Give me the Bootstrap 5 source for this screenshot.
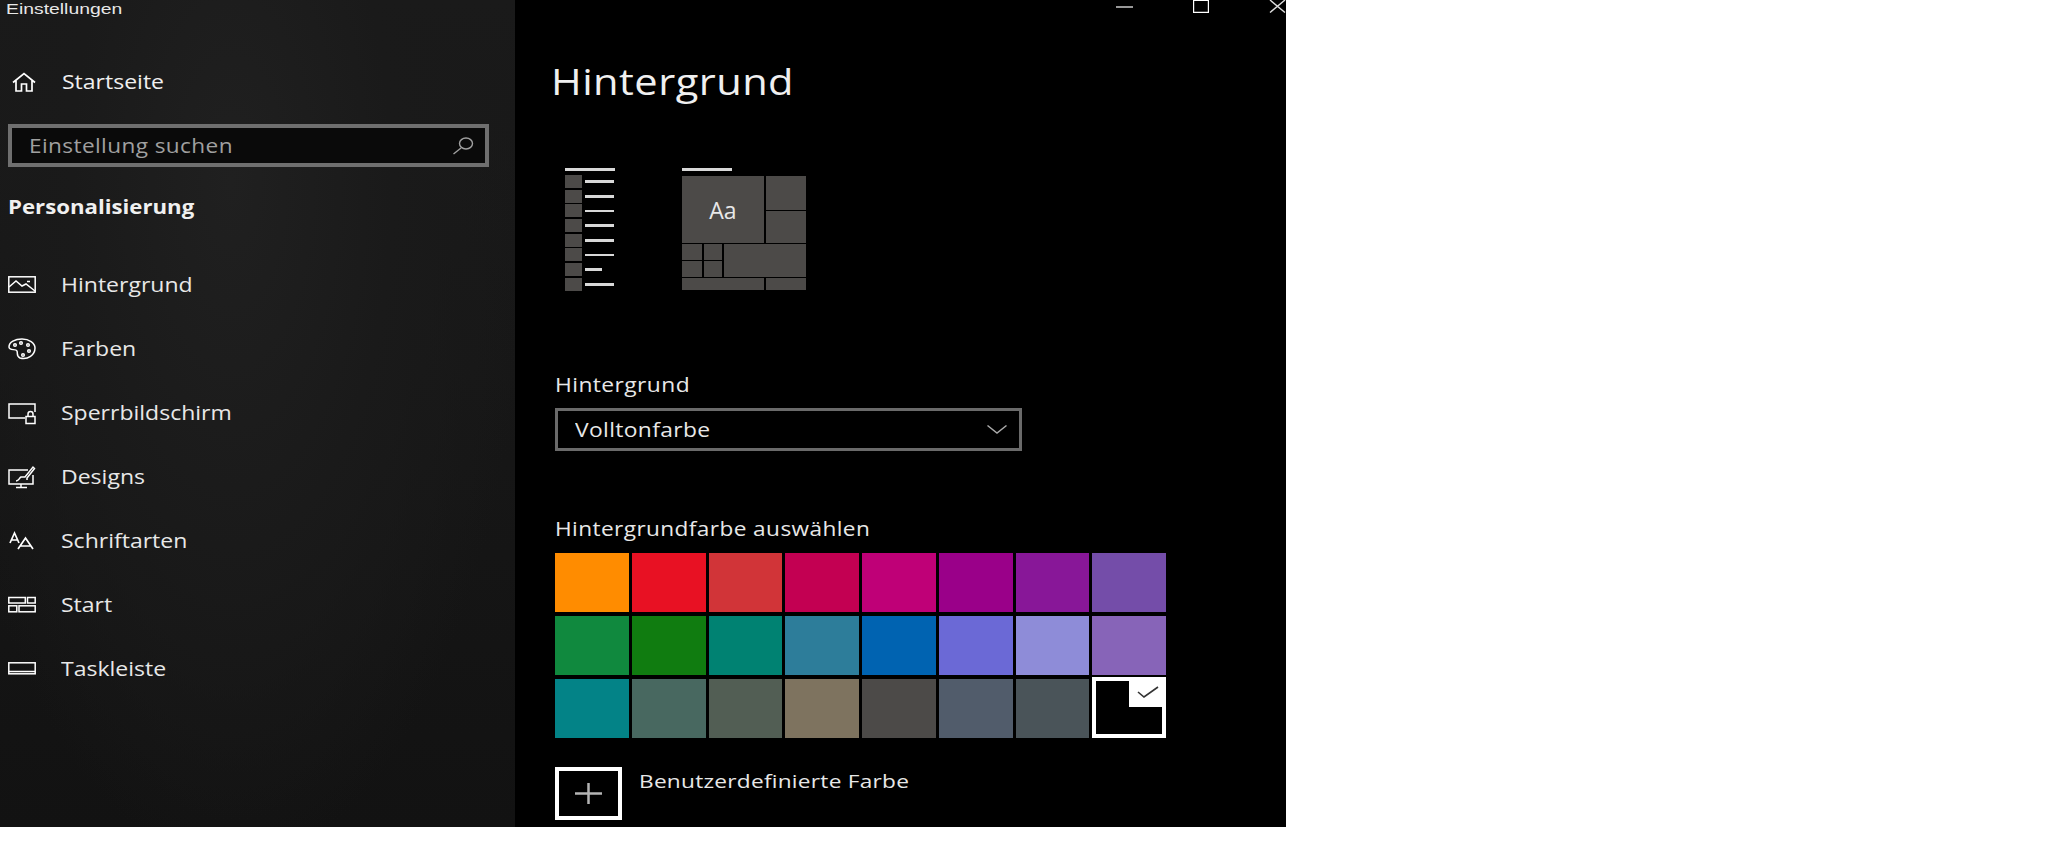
<!DOCTYPE html>
<html lang="de">
<head>
<meta charset="utf-8">
<title>Einstellungen</title>
<link href="https://cdn.jsdelivr.net/npm/bootstrap@5.3.0/dist/css/bootstrap.min.css" rel="stylesheet">
<style>
html,body{background:#fff;margin:0;height:864px;overflow:hidden}
body{font-family:"Open Sans","Liberation Sans",sans-serif;color:#f0f0f0;font-size:20px}
svg{display:block;flex:none}
.wide{display:inline-block;transform-origin:left center}
.win{width:1286px;height:827px;background:#000;overflow:hidden}
.side{width:515px;background:radial-gradient(ellipse at 45% 22%,#202020 0,#1a1a1a 40%,transparent 75%),linear-gradient(180deg,#1a1a1a 0,#171717 45%,#121212 100%);padding-left:8px}
.wintitle{height:16px;line-height:normal;font-family:"Liberation Sans",sans-serif;font-size:15px;margin-left:-2px;color:#e8e8e8}
.wintitle .wide{transform:scaleX(1.29)}
.home{height:32px;margin-top:50px;padding-left:4px;gap:26px;line-height:32px;font-size:19.5px}
.home .wide,.navrow .wide{transform:scaleX(1.18)}
.searchbox{width:481px;height:43px;margin-top:26px;border:4px solid #6f6f6f;background:#0a0a0a;padding:0 11px 0 17px;color:#a0a0a0;font-size:20px;letter-spacing:.35px}
.searchbox .wide{transform:scaleX(1.13)}
.grouphead{height:32px;margin-top:24px;line-height:32px;font-weight:700;font-size:20px}
.grouphead .wide{transform:scaleX(1.11)}
.navlist{margin-top:30px}
.navrow{height:64px;gap:25px;font-size:19.5px;color:#e8e8e8}
.navrow svg{width:28px;height:24px}
.main{padding-left:40px}
.ctrls{height:16px}
.ctrl-min{margin-right:60px}
.ctrl-max{margin-right:60px}
.pagehead{height:50px;line-height:50px;margin:40px 0 0 -4px;font-size:36.5px;font-weight:400;letter-spacing:.4px}
.pagehead .wide{transform:scaleX(1.14)}
.preview{margin-top:62px;height:123px;padding-left:10px;gap:67px}
.listprev{width:50px;gap:1.7px}
.prevbar{height:3px;background:#d8d8d8}
.listprev .prevbar{margin-bottom:2.3px}
.listrow{height:13px;gap:3px;align-items:center}
.sq{width:17px;height:13px;background:#4c4a48}
.ln{height:3px;width:29px;background:#d8d8d8}
.ln-thin{height:2px}
.ln-short{width:17px}
.tilehead{width:50px}
.tiles{display:grid;width:124px;margin-top:5px;grid-template-columns:20px 18px 40px 40px;grid-template-rows:34px 32px 16px 16px 12px;gap:1px 2px}
.tiles div{background:#4c4a48}
.tiles .t-aa{grid-column:1/4;grid-row:1/3;font-size:23px;line-height:68px;text-align:center;color:#e8e8e8}
.t-wide{grid-column:3/5;grid-row:3/5}
.t-b1{grid-column:1/4}
.fieldlabel{height:28px;line-height:28px;font-size:19.5px;letter-spacing:.35px;color:#e8e8e8}
.fl1{margin-top:80px}
.fl1 .wide{transform:scaleX(1.17)}
.fl2{margin-top:64px}
.fl2 .wide{transform:scaleX(1.16)}
.selectbox{width:467px;height:43px;margin-top:9px;border:3.5px solid #6a6a6a;padding:0 12px 0 17px;font-size:19.5px;letter-spacing:.3px;color:#e8e8e8}
.selectbox .wide{transform:scaleX(1.17)}
.palette{display:grid;width:611px;margin-top:10px;grid-template-columns:repeat(8,1fr);grid-auto-rows:59px;gap:4px 3px}
.swatch-on{background:#000;border:4px solid #fff;margin-top:-2px;position:relative}
.notch{position:absolute;top:-4px;right:-4px;width:37px;height:30px;background:#fff;display:flex;align-items:center;justify-content:center}
.custom{margin-top:29px;gap:17px}
.plusbox{width:67px;height:53px;border:4px solid #fff}
.customlabel{line-height:28px;font-size:18.5px;letter-spacing:.2px;color:#e8e8e8}
.customlabel .wide{transform:scaleX(1.225)}
</style>
</head>
<body>
<div class="win d-flex">
  <aside class="side flex-shrink-0">
    <div class="wintitle"><span class="wide">Einstellungen</span></div>
    <div class="home d-flex align-items-center">
      <svg width="24" height="20" viewBox="0 0 24 20" fill="none" stroke="#fff" stroke-width="1.7"><path d="M1 10.500 12 1.500 23 10.500M4 8.500V19H9.500V12H14.500V19H20V8.500"/></svg>
      <span class="wide">Startseite</span>
    </div>
    <div class="searchbox d-flex align-items-center justify-content-between">
      <span class="wide">Einstellung suchen</span>
      <svg width="22" height="18" viewBox="0 0 22 18" fill="none" stroke="#a0a0a0" stroke-width="1.4"><ellipse cx="14" cy="6.5" rx="6.5" ry="5.5"/><path d="M9 11 1.5 17"/></svg>
    </div>
    <div class="grouphead"><span class="wide">Personalisierung</span></div>
    <nav class="navlist">
      <div class="navrow d-flex align-items-center">
        <svg viewBox="0 0 28 24" fill="none" stroke="#fff" stroke-width="1.5"><rect x=".8" y="3.8" width="26.4" height="15.4"/><path d="M1 14 8 8l6 5 4-2 9 7M19 8.5h3" /></svg>
        <span class="wide">Hintergrund</span>
      </div>
      <div class="navrow d-flex align-items-center">
        <svg viewBox="0 0 28 24" fill="none" stroke="#fff" stroke-width="1.5"><path d="M14 2C7 2 1 5 1 10c0 4 7 1.500 8 4 1 2.500-1 5 3 7 8 2 15-3 15-10 0-5-6-9-13-9Z"/><circle cx="7" cy="8" r="1.300"/><circle cx="13" cy="6" r="1.300"/><circle cx="20" cy="8" r="1.300"/><circle cx="21" cy="14" r="1.300"/><circle cx="15" cy="18" r="1.300"/></svg>
        <span class="wide">Farben</span>
      </div>
      <div class="navrow d-flex align-items-center">
        <svg viewBox="0 0 28 24" fill="none" stroke="#fff" stroke-width="1.5"><path d="M17 17H1V3h26v8"/><rect x="18" y="15.500" width="9" height="7"/><path d="M20 15.500v-2.500a2.500 2.500 0 0 1 5 0v2.500"/></svg>
        <span class="wide">Sperrbildschirm</span>
      </div>
      <div class="navrow d-flex align-items-center">
        <svg viewBox="0 0 28 24" fill="none" stroke="#fff" stroke-width="1.5"><path d="M20 5H1v14h24V10M13 19v3M8 22.500h11"/><path d="M8 16c3 0 3-3 5-4l4 0 8-10 1.500 1.500L19 13v2" /></svg>
        <span class="wide">Designs</span>
      </div>
      <div class="navrow d-flex align-items-center">
        <svg viewBox="0 0 28 24" fill="none" stroke="#fff" stroke-width="1.700"><path d="m2 14 4.500-10L11 14M3.500 11h6M10 20 17.500 9 25 20M12.500 17h10"/></svg>
        <span class="wide">Schriftarten</span>
      </div>
      <div class="navrow d-flex align-items-center">
        <svg viewBox="0 0 28 24" fill="none" stroke="#fff" stroke-width="1.500"><rect x=".8" y="4.500" width="16.500" height="5.500"/><rect x="19.500" y="4.500" width="7.700" height="5.500"/><rect x=".8" y="12.800" width="8" height="6"/><rect x="11" y="12.800" width="16.200" height="6"/></svg>
        <span class="wide">Start</span>
      </div>
      <div class="navrow d-flex align-items-center">
        <svg viewBox="0 0 28 24" fill="none" stroke="#fff" stroke-width="1.500"><rect x=".8" y="5.800" width="26.400" height="11"/><path d="M1 14.500h26"/></svg>
        <span class="wide">Taskleiste</span>
      </div>
    </nav>
  </aside>
  <main class="main flex-grow-1">
    <div class="ctrls d-flex justify-content-end align-items-start">
      <svg class="ctrl-min" width="17" height="12" viewBox="0 0 17 12" stroke="#fff" stroke-width="1.200"><path d="M0 7h17"/></svg>
      <svg class="ctrl-max" width="16" height="13" viewBox="0 0 16 13" fill="none" stroke="#fff" stroke-width="1.200"><path d="M.6 0v12.400h14.800V0M.6.500h14.800"/></svg>
      <svg width="17" height="13" viewBox="0 0 17 13" stroke="#ddd" stroke-width="1.400"><path d="M1 0l15 12.500M16 0 1 12.500"/></svg>
    </div>
    <h1 class="pagehead"><span class="wide">Hintergrund</span></h1>
    <div class="preview d-flex">
      <div class="listprev d-flex flex-column">
        <div class="prevbar"></div>
        <div class="listrow d-flex"><span class="sq"></span><span class="ln"></span></div>
        <div class="listrow d-flex"><span class="sq"></span><span class="ln"></span></div>
        <div class="listrow d-flex"><span class="sq"></span><span class="ln ln-thin"></span></div>
        <div class="listrow d-flex"><span class="sq"></span><span class="ln"></span></div>
        <div class="listrow d-flex"><span class="sq"></span><span class="ln"></span></div>
        <div class="listrow d-flex"><span class="sq"></span><span class="ln ln-thin"></span></div>
        <div class="listrow d-flex"><span class="sq"></span><span class="ln ln-short"></span></div>
        <div class="listrow d-flex"><span class="sq"></span><span class="ln"></span></div>
      </div>
      <div>
        <div class="prevbar tilehead"></div>
        <div class="tiles">
          <div class="t-aa">Aa</div><div></div><div></div>
          <div></div><div></div><div class="t-wide"></div>
          <div></div><div></div>
          <div class="t-b1"></div><div></div>
        </div>
      </div>
    </div>
    <div class="fieldlabel fl1"><span class="wide">Hintergrund</span></div>
    <div class="selectbox d-flex align-items-center justify-content-between">
      <span class="wide">Volltonfarbe</span>
      <svg width="20" height="9" viewBox="0 0 20 9" fill="none" stroke="#aaa" stroke-width="1.400"><path d="M.5.500 10 8 19.500.500"/></svg>
    </div>
    <div class="fieldlabel fl2"><span class="wide">Hintergrundfarbe auswählen</span></div>
    <div class="palette" id="pal"></div>
    <div class="custom d-flex align-items-start">
      <div class="plusbox d-flex align-items-center justify-content-center">
        <svg width="27" height="21" viewBox="0 0 27 21" stroke="#b4b4b4" stroke-width="2.500"><path d="M0 10.500h27M13.500 0v21"/></svg>
      </div>
      <div class="customlabel"><span class="wide">Benutzerdefinierte Farbe</span></div>
    </div>
  </main>
</div>
<script src="https://cdn.jsdelivr.net/npm/bootstrap@5.3.0/dist/js/bootstrap.bundle.min.js"></script>
<script>
var cols=["#ff8c00","#e81123","#d13438","#c30052","#bf0077","#9a0089","#881798","#744da9","#10893e","#107c10","#008272","#2d7d9a","#0063b1","#6b69d6","#8e8cd8","#8764b8","#038387","#486860","#525e54","#7e735f","#4c4a48","#515c6b","#4a5459"];
var p=document.getElementById('pal');
cols.forEach(function(c){var d=document.createElement('div');d.style.background=c;p.appendChild(d);});
var s=document.createElement('div');s.className='swatch-on';
s.innerHTML='<div class="notch"><svg width="22" height="12" viewBox="0 0 22 12" fill="none" stroke="#333" stroke-width="1.600"><path d="M1 6l6 5L21 1"/></svg></div>';
p.appendChild(s);
</script>
</body>
</html>
